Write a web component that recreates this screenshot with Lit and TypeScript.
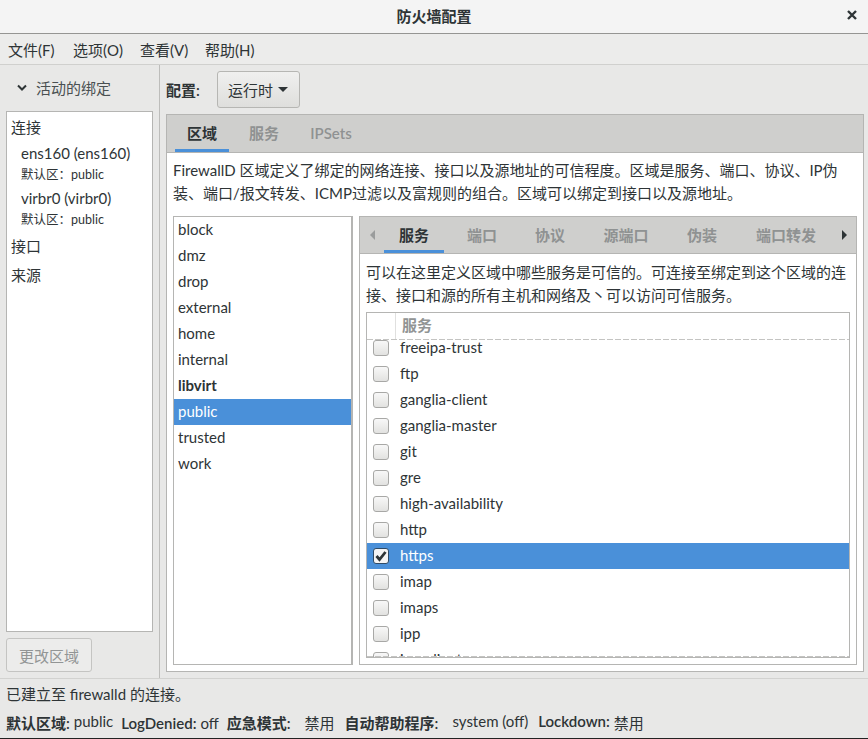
import { LitElement, html, css } from "lit";
import { customElement } from "lit/decorators.js";

const zones = ["block", "dmz", "drop", "external", "home", "internal", "libvirt", "public", "trusted", "work"];
const services = ["freeipa-trust", "ftp", "ganglia-client", "ganglia-master", "git", "gre", "high-availability", "http", "https", "imap", "imaps", "ipp", "ipp-client"];

@customElement("app-root")
export class AppRoot extends LitElement {
  static styles = css`
    :host { display: flex; flex-direction: column; width: 868px; height: 739px; overflow: hidden; background: #e8e8e7; color: #2e3436;
      font-family: "Lato", "Noto Sans CJK SC", sans-serif; font-size: 15px; }
    * { box-sizing: border-box; }
    .title { height: 34px; flex: none; background: #f4f4f4; border-bottom: 1px solid #959593; display: flex; align-items: center; justify-content: center; position: relative; font-weight: 600; font-size: 15px; color: #2e3436; padding-bottom: 3px; }
    .close { position: absolute; left: 845px; top: 8px; width: 14px; height: 14px; }
    .menu { height: 31px; flex: none; display: flex; padding: 1px 0 0 8px; align-items: center; border-bottom: 1px solid #d0d0ce; background: #ececeb; }
    .menu span { width: 65px; white-space: nowrap; }
    .main { height: 614px; flex: none; display: flex; border-bottom: 1px solid #d2d2d0; }
    .left { width: 160px; flex: none; border-right: 1px solid #bdbdbb; padding: 0 6px 0 6px; display: flex; flex-direction: column; }
    .exp { height: 46px; flex: none; display: flex; align-items: center; gap: 9px; padding: 0 0 1px 11px; color: #4a5052; }
    .conn { width: 147px; height: 521px; flex: none; background: #fff; border: 1px solid #b5b5b3; padding: 0 4px; display: flex; flex-direction: column; }
    .conn .h { height: 29px; flex: none; display: flex; align-items: center; color: #2e3436; }
    .conn .n { padding-left: 10px; height: 22px; flex: none; display: flex; align-items: center; margin-top: 1px; }
    .conn .d { padding-left: 10px; height: 19px; flex: none; display: flex; align-items: center; font-size: 12.5px; margin-bottom: 3px; }
    .btn { margin-top: 6px; width: 86px; height: 34px; flex: none; border: 1px solid #c4c4c2; border-radius: 3px; background: #ececeb; color: #929595; display: flex; align-items: center; justify-content: center; }
    .right { flex: 1; padding: 6px 4px 0 6px; display: flex; flex-direction: column; min-width: 0; }
    .cfg { height: 37px; flex: none; display: flex; align-items: center; gap: 15px; }
    .cfg b { font-weight: 600; width: 36px; white-space: nowrap; }
    .combo { width: 83px; height: 37px; border: 1px solid #b6b6b3; border-radius: 3px; background: linear-gradient(#f0f0ef, #dededc); display: flex; align-items: center; gap: 5px; padding-left: 10px; }
    .caret { width: 0; height: 0; border-left: 5px solid transparent; border-right: 5px solid transparent; border-top: 5px solid #2e3436; }
    .nb { margin-top: 6px; width: 698px; height: 558px; flex: none; border: 1px solid #b5b5b3; background: #fff; display: flex; flex-direction: column; }
    .tabs { height: 38px; flex: none; background: #cfcfcd; border-bottom: 1px solid #b5b5b3; display: flex; padding-left: 8px; }
    .tab { height: 37px; display: flex; align-items: center; justify-content: center; font-weight: 600; color: #8f9292; padding-bottom: 2px; }
    .tab.on { color: #2e3436; border-bottom: 3px solid #4a90d9; padding-bottom: 0; }
    .t1 { width: 54px; }
    .t2 { width: 70px; }
    .t3 { width: 62px; margin-left: 1px; }
    .desc { padding: 6px 6px 0 6px; line-height: 23px; height: 63px; flex: none; }
    .panes { display: flex; gap: 6px; padding: 0 6px 0 6px; flex: 1; min-height: 0; }
    .zones { width: 180px; height: 449px; flex: none; border: 1px solid #b5b5b3; border-right-width: 2px; background: #fff; }
    .z { height: 26px; display: flex; align-items: center; padding: 0 0 2px 4px; }
    .z.b { font-weight: 700; }
    .z.sel { background: #4a90d9; color: #fff; }
    .inner { width: 498px; height: 449px; flex: none; border: 1px solid #b5b5b3; display: flex; flex-direction: column; }
    .itabs { height: 37px; flex: none; background: #cfcfcd; border-bottom: 1px solid #b5b5b3; display: flex; position: relative; }
    .itabs .tab { position: absolute; top: 0; height: 36px; transform: translateX(-50%); white-space: nowrap; }
    .itabs .tab.on { width: 60px; padding-top: 2px; }
    .arrow { position: absolute; top: 13px; width: 0; height: 0; border-top: 5px solid transparent; border-bottom: 5px solid transparent; }
    .arrow.l { left: 10px; border-right: 5px solid #9a9c9c; }
    .arrow.r { left: 482px; border-left: 5px solid #2e3436; }
    .idesc { padding: 7px 6px 0 6px; line-height: 23px; height: 58px; flex: none; white-space: nowrap; }
    .tree { margin: 0 6px; width: 484px; height: 346px; flex: none; border: 1px solid #b5b5b3; position: relative; overflow: hidden; display: flex; flex-direction: column; }
    .thead { height: 26px; flex: none; display: flex; background: #fff; position: relative; z-index: 1; }
    .thead .c { width: 29px; border-right: 1px solid #e0e0df; }
    .thead .s { padding: 0 0 4px 6px; color: #919494; font-weight: 600; display: flex; align-items: center; }
    .rows { flex: 1; overflow: hidden; }
    .row { height: 26px; display: flex; align-items: center; padding: 0 0 0 6px; gap: 11px; flex: none; }
    .row:first-child { margin-top: -4px; }
    .row.sel { background: #4a90d9; color: #fff; }
    .lbl { position: relative; top: -1px; }
    .cb { width: 16px; height: 16px; flex: none; border: 1px solid #a8a8a6; border-radius: 3px; background: linear-gradient(#f8f8f8, #e2e2e0); display: flex; align-items: center; justify-content: center; }
    .row.sel .cb { background: #f4f4f4; border-color: #2e4a66; }
    .dash { position: absolute; left: 0; right: 0; height: 1px; z-index: 2; background: repeating-linear-gradient(90deg, #c4c4c2 0 6px, transparent 6px 8px); }
    .dash.top { top: 26px; }
    .dash.bot { bottom: 0; }
    .status { flex: none; padding: 0 6px; }
    .s1 { height: 29px; display: flex; align-items: center; }
    .s2 { height: 29px; display: flex; align-items: center; white-space: nowrap; }
    .s2 b { font-weight: 600; }
    .bar { height: 1px; background: #222; flex: none; }
    .spacer { flex: 1; }
    .g { display: inline-flex; gap: 4px; margin-right: 8px; }
    .g.w { gap: 14px; margin-right: 10px; }
  `;

  render() {
    return html`
      <div class="title">防火墙配置
        <svg class="close" viewBox="0 0 14 14"><path d="M3 3L11 11M11 3L3 11" stroke="#2e3436" stroke-width="2.4" fill="none"/></svg>
      </div>
      <div class="menu"><span>文件(F)</span><span style="width:67px">选项(O)</span><span>查看(V)</span><span>帮助(H)</span></div>
      <div class="main">
        <div class="left">
          <div class="exp">
            <svg width="10" height="8" viewBox="0 0 10 8"><path d="M1 1.5L5 5.5L9 1.5" stroke="#2e3436" stroke-width="2" fill="none"/></svg>
            活动的绑定
          </div>
          <div class="conn">
            <div class="h">连接</div>
            <div class="n">ens160 (ens160)</div>
            <div class="d">默认区：public</div>
            <div class="n">virbr0 (virbr0)</div>
            <div class="d">默认区：public</div>
            <div class="h">接口</div>
            <div class="h">来源</div>
          </div>
          <div class="btn">更改区域</div>
        </div>
        <div class="right">
          <div class="cfg"><b>配置:</b><div class="combo">运行时<span class="caret"></span></div></div>
          <div class="nb">
            <div class="tabs">
              <div class="tab on t1">区域</div><div class="tab t2">服务</div><div class="tab t3">IPSets</div>
            </div>
            <div class="desc">FirewallD 区域定义了绑定的网络连接、接口以及源地址的可信程度。区域是服务、端口、协议、IP伪装、端口/报文转发、ICMP过滤以及富规则的组合。区域可以绑定到接口以及源地址。</div>
            <div class="panes">
              <div class="zones">
                ${zones.map((z) => html`<div class="z ${z === "libvirt" ? "b" : ""} ${z === "public" ? "sel" : ""}">${z}</div>`)}
              </div>
              <div class="inner">
                <div class="itabs">
                  <span class="arrow l"></span>
                  <div class="tab on" style="left:54px">服务</div>
                  <div class="tab" style="left:122px">端口</div>
                  <div class="tab" style="left:190px">协议</div>
                  <div class="tab" style="left:266px">源端口</div>
                  <div class="tab" style="left:342px">伪装</div>
                  <div class="tab" style="left:426px">端口转发</div>
                  <span class="arrow r"></span>
                </div>
                <div class="idesc">可以在这里定义区域中哪些服务是可信的。可连接至绑定到这个区域的连<br>接、接口和源的所有主机和网络及丶可以访问可信服务。</div>
                <div class="tree">
                  <div class="thead"><div class="c"></div><div class="s">服务</div></div>
                  <div class="dash top"></div>
                  <div class="rows">
                    ${services.map((s) => html`<div class="row ${s === "https" ? "sel" : ""}">
                      <span class="cb">${s === "https" ? html`<svg width="12" height="12" viewBox="0 0 12 12"><path d="M1.5 6L4.5 9.5L10.5 2" stroke="#2e3436" stroke-width="2.8" fill="none"/></svg>` : ""}</span><span class="lbl">${s}</span>
                    </div>`)}
                  </div>
                  <div class="dash bot"></div>
                </div>
              </div>
            </div>
          </div>
        </div>
      </div>
      <div class="status">
        <div class="s1">已建立至 firewalld 的连接。</div>
        <div class="s2">
          <span class="g"><b>默认区域:</b>public</span>
          <span class="g"><b>LogDenied:</b>off</span>
          <span class="g w"><b>应急模式:</b>禁用</span>
          <span class="g w"><b>自动帮助程序:</b>system (off)</span>
          <span class="g"><b>Lockdown:</b>禁用</span>
        </div>
      </div>
      <div class="spacer"></div>
      <div class="bar"></div>
    `;
  }
}
